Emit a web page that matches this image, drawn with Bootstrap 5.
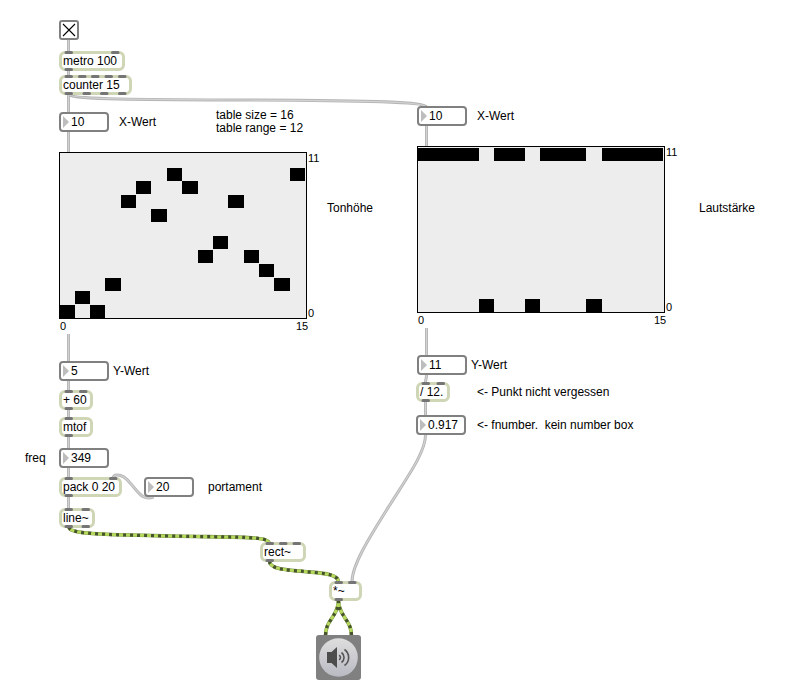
<!DOCTYPE html>
<html lang="de">
<head>
<meta charset="utf-8">
<meta name="viewport" content="width=device-width, initial-scale=1">
<title>Patcher</title>
<link href="https://cdn.jsdelivr.net/npm/bootstrap@5.3.0/dist/css/bootstrap.min.css" rel="stylesheet">
<style>
body{font:12px/14px "Liberation Sans",Arial,sans-serif;color:#000;background:#fff}
.patcher{width:786px;height:697px}
.patcher>*{position:absolute}
.cords{left:0;top:0}
.cord{fill:none;stroke:#b5b5b5;stroke-width:3}
.cord-core{fill:none;stroke:#d2d2d2;stroke-width:1.2}
.sig{fill:none;stroke:#b5d95c;stroke-width:3}
.sig-edge{fill:none;stroke:#6f8442;stroke-width:3.6}
.sig-dash{fill:none;stroke:#46532c;stroke-width:3.2;stroke-dasharray:3 4}
.obj{height:20px;border:3px solid #ced6b5;border-radius:6px;background:#fff;padding-left:1px;line-height:15px;white-space:pre}
.num{width:50px;height:20px;border:2px solid #808080;border-radius:4px;background:#fff;padding-left:10px;line-height:17px}
.num::before{content:"";position:absolute;left:2px;top:2px;border:6px solid transparent;border-left-color:#bdbdbd;border-right:0}
.note{white-space:pre;line-height:13px}
.tick{font-size:11px;line-height:11px}
.toggle-box{left:59px;top:20px;width:20px;height:20px;border:2px solid #808080;border-radius:3px;background:#fff}
.table-box{width:248px;height:167px;border:1px solid #000;background:#ededed}
.table-box svg{left:-1px;top:-1px}
#metro{left:59px;top:51px;width:66px}
#counter{left:59px;top:75px;width:73px}
#x1{left:59px;top:112px}
#x2{left:417px;top:106px}
#pitch{left:59px;top:152px}
#volume{left:417px;top:146px}
#y1{left:59px;top:361px}
#plus{left:59px;top:390px;width:34px}
#mtof{left:59px;top:417px;width:34px}
#freq{left:59px;top:448px}
#pack{left:59px;top:477px;width:63px}
#line{left:59px;top:508px;width:36px}
#port{left:144px;top:477px}
#rect{left:260px;top:542px;width:46px}
#mul{left:329px;top:581px;width:33px}
#y2{left:417px;top:355px}
#div{left:416px;top:382px;width:34px}
#fnum{left:416px;top:415px}
#dac{left:316px;top:635px}
#n-x1{left:119px;top:116px}
#n-size{left:216px;top:109px}
#n-x2{left:477px;top:110px}
#n-pitch{left:327px;top:202px}
#n-vol{left:699px;top:202px}
#n-y1{left:113px;top:365px}
#n-y2{left:471px;top:359px}
#n-punkt{left:477px;top:386px}
#n-fnum{left:477px;top:419px}
#n-freq{left:25px;top:452px}
#n-port{left:208px;top:481px}
#t1-max{left:308px;top:153px}
#t1-min{left:308px;top:308px}
#t1-x0{left:60px;top:321px}
#t1-x15{left:296px;top:321px}
#t2-max{left:666px;top:147px}
#t2-min{left:666px;top:302px}
#t2-x0{left:418px;top:315px}
#t2-x15{left:654px;top:315px}
</style>
</head>
<body>
<main class="patcher position-relative overflow-hidden">
<svg class="cords" width="786" height="697" aria-hidden="true">
  <defs>
    <path id="patch" d="M68.500 40V52M68.500 70V76M68.500 94V112M68.500 132V152M68.500 94C69 99 115 99.500 247 100C380 100.500 425 102 426.500 107M426.500 126V146M68.500 334V361M68.500 381V391M68.500 409V418M68.500 436V448M68.500 468V478M68.500 496V509M426.500 328V355M426.500 375C426.500 380 425.500 378 425.500 383M425.500 401V415M425.500 435C425.500 452 408 476 388.500 507C369 538 352 565 352 582M153.500 497C143 501 139 493 131 484C125 477 122 475 117 475C114 475 113 477 113 479"/>
    <path id="signal" d="M69 527C69 534 100 534.500 169 536C238 537.500 269 536 269 543M269.500 561C269.500 570 290 570 304 571.500C318 573 338.500 573 338.500 582M338.500 600C338.500 609 335 613 332 618C328 624 325.500 628 325.500 636M338.500 600C338.500 609 342 613 345 618C349 624 351.500 628 351.500 636"/>
  </defs>
  <use href="#patch" class="cord"/><use href="#patch" class="cord-core"/>
  <use href="#signal" class="sig-edge"/><use href="#signal" class="sig"/><use href="#signal" class="sig-dash"/>
</svg>

<div class="toggle-box"><svg class="d-block" width="16" height="16"><path d="M2 2L14 14M14 2L2 14" stroke="#000" stroke-width="1.1"/></svg></div>
<div class="obj" id="metro">metro 100</div>
<div class="obj" id="counter">counter 15</div>
<div class="num" id="x1">10</div>
<div class="note" id="n-x1">X-Wert</div>
<div class="note" id="n-size">table size = 16
table range = 12</div>
<div class="num" id="x2">10</div>
<div class="note" id="n-x2">X-Wert</div>

<div class="table-box" id="pitch"><svg class="position-absolute" width="248" height="167" shape-rendering="crispEdges"></svg></div>
<div class="tick" id="t1-max">11</div><div class="tick" id="t1-min">0</div>
<div class="tick" id="t1-x0">0</div><div class="tick" id="t1-x15">15</div>
<div class="note" id="n-pitch">Tonhöhe</div>

<div class="table-box" id="volume"><svg class="position-absolute" width="248" height="167" shape-rendering="crispEdges"></svg></div>
<div class="tick" id="t2-max">11</div><div class="tick" id="t2-min">0</div>
<div class="tick" id="t2-x0">0</div><div class="tick" id="t2-x15">15</div>
<div class="note" id="n-vol">Lautstärke</div>

<div class="num" id="y1">5</div>
<div class="note" id="n-y1">Y-Wert</div>
<div class="obj" id="plus">+ 60</div>
<div class="obj" id="mtof">mtof</div>
<div class="note" id="n-freq">freq</div>
<div class="num" id="freq">349</div>
<div class="obj" id="pack">pack 0 20</div>
<div class="num" id="port">20</div>
<div class="note" id="n-port">portament</div>
<div class="obj" id="line">line~</div>
<div class="obj" id="rect">rect~</div>
<div class="obj" id="mul">*~</div>

<div class="num" id="y2">11</div>
<div class="note" id="n-y2">Y-Wert</div>
<div class="obj" id="div">/ 12.</div>
<div class="note" id="n-punkt">&lt;- Punkt nicht vergessen</div>
<div class="num" id="fnum">0.917</div>
<div class="note" id="n-fnum">&lt;- fnumber.  kein number box</div>

<svg id="dac" width="45" height="45" role="img" aria-label="Audio">
  <defs><linearGradient id="disc" x1="0" y1="0" x2="0" y2="1"><stop offset="0" stop-color="#dedede"/><stop offset="1" stop-color="#b9b9c3"/></linearGradient></defs>
  <rect width="45" height="45" rx="3" fill="#808080"/>
  <circle cx="22.500" cy="22.500" r="19.300" fill="url(#disc)"/>
  <path d="M11 17H15.500L21 12V33L15.500 28H11Z" fill="#4d4d4d"/>
  <path d="M23 20.200A2.500 2.500 0 0 1 23 24.800M25.500 17.500A6.200 6.200 0 0 1 25.500 27.500M28.500 14.500A9.800 9.800 0 0 1 28.500 30.500" fill="none" stroke="#555" stroke-width="1.600"/>
</svg>

<!-- inlets and outlets -->
<svg class="cords" width="786" height="697" aria-hidden="true">
  <path fill="none" stroke="#757575" stroke-width="3" stroke-linecap="round" d="M66 52.500h5.500M112.500 52.500h5.500M66 69.500h5.500
  M66 76.500h5.500M79.500 76.500h5.500M92.500 76.500h5.500M106 76.500h5.500M119.500 76.500h5.500M66 93.500h5.500M84 93.500h5.500M101.500 93.500h5.500M119.500 93.500h5.500
  M66 391.500h5.500M80.500 391.500h5.500M66 408.500h5.500M66 418.500h5.500M66 435.500h5.500
  M66 478.500h5.500M110.500 478.500h5.500M66 495.500h5.500M66 509.500h5.500M83 509.500h5.500M66 526.500h5.500M83 526.500h5.500
  M267 543.500h5.500M280.500 543.500h5.500M294 543.500h5.500M267 560.500h5.500
  M336 582.500h5.500M349.500 582.500h5.500M336 599.500h5.500
  M423 383.500h5.500M438 383.500h5.500M423 400.500h5.500"/>
</svg>
</main>
<script src="https://cdn.jsdelivr.net/npm/bootstrap@5.3.0/dist/js/bootstrap.bundle.min.js"></script>
<script>
const colX = [0,16,31,46,62,77,92,108,123,139,154,169,185,200,215,231,246];
const rowY = [153,139,126,112,98,84,71,57,43,29,16,2];
const tables = {
  pitch: [0,1,0,2,8,9,7,10,9,4,5,8,4,3,2,10],
  volume: [11,11,11,11,0,11,11,0,11,11,11,0,11,11,11,11]
};
for (const [id, values] of Object.entries(tables)) {
  document.querySelector('#' + id + ' svg').innerHTML = values.map((v, i) =>
    `<rect x="${colX[i]}" y="${rowY[v]}" width="${colX[i + 1] - colX[i]}" height="13"/>`).join('');
}
</script>
</body>
</html>
